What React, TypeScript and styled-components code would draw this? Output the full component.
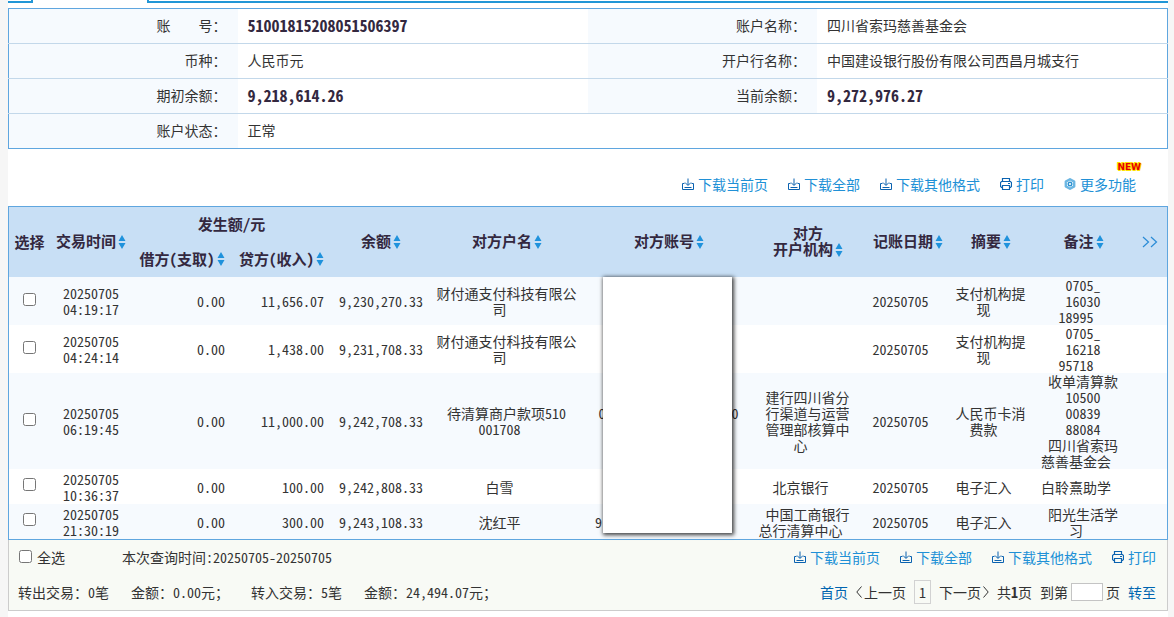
import React from "react";
import styled, { createGlobalStyle } from "styled-components";

const GlobalStyle = createGlobalStyle`
  * { box-sizing: border-box; }
  body {
    margin: 0;
    background: #f6f6f6;
    color: #333;
    font-family: "Noto Sans CJK SC", "Liberation Sans", sans-serif;
    font-size: 14px;
    line-height: 16px;
    font-feature-settings: "hwid" 1;
  }
  button, input {
    font: inherit;
    font-feature-settings: inherit;
    color: inherit;
  }
`;

const Page = styled.main`
  min-height: 100vh;
  margin: 0 6px 0 8px;
  background: #fff;
`;

const TabStrip = styled.div`
  display: flex;
  gap: 114px;
  height: 3px;
  margin-bottom: 5px;
`;

const TabEdge = styled.div<{ $side: "left" | "right" }>`
  border-bottom: 2px solid #2196d6;
  ${({ $side }) =>
    $side === "left"
      ? "width: 25px; border-right: 2px solid #2196d6;"
      : "flex: 1; border-left: 2px solid #2196d6;"}
`;

const InfoTable = styled.table`
  width: 100%;
  table-layout: fixed;
  border-collapse: collapse;
  border: 1px solid #5fa6df;
`;

const InfoRow = styled.tr`
  height: 35px;
  & + & { border-top: 1px solid #c3d8ea; }
`;

const InfoLabel = styled.th`
  width: 229px;
  padding: 0 11px 2px 0;
  background: #f6fafe;
  font-weight: normal;
  text-align: right;
  white-space: pre;
`;

const InfoValue = styled.td<{ $strong?: boolean }>`
  padding: 0 0 2px 10px;
  ${({ $strong }) => $strong && "font-size: 16px; font-weight: bold; color: #33283f;"}
`;

const Toolbar = styled.div`
  display: flex;
  justify-content: flex-end;
  padding: 27px 32px 14px 0;
`;

const Actions = styled.div`
  display: flex;
  gap: 20px;
`;

const Action = styled.a`
  position: relative;
  display: flex;
  align-items: center;
  gap: 4px;
  color: #2090d6;
  text-decoration: none;
`;

const NewBadge = styled.span`
  position: absolute;
  top: -14px;
  right: -5px;
  color: #e60000;
  font: bold 9px/10px "DejaVu Sans", sans-serif;
  font-feature-settings: normal;
  text-shadow: 1px 0 #ffe100, -1px 0 #ffe100, 0 1px #ffe100, 0 -1px #ffe100,
    1px 1px #ffe100, -1px -1px #ffe100;
`;

const DataTable = styled.table`
  width: 100%;
  table-layout: fixed;
  border-collapse: separate;
  border-spacing: 0;
  border: 1px solid #5fa6df;
`;

const HeadRow = styled.tr`
  height: 35px;
  background: #c8dff5;
`;

const HeadCell = styled.th<{ $shift?: boolean }>`
  padding: 0 0 0 ${({ $shift }) => ($shift ? "8px" : "0")};
  font-size: 15px;
  line-height: 16px;
  color: #33283f;
  white-space: nowrap;
`;

const GroupHeadCell = styled(HeadCell)`
  padding-bottom: 2px;
`;

const IconButton = styled.button`
  padding: 0;
  border: 0;
  background: none;
  vertical-align: middle;
  cursor: pointer;
  svg { display: block; }
`;

const SortButton = styled(IconButton)`
  margin: 0 0 2px 2px;
`;

const MoreButton = styled(IconButton)`
  display: block;
  margin: 0 auto;
`;

const DataRow = styled.tr`
  height: 35px;
  &:nth-child(odd) { background: #f6fafe; }
`;

const Cell = styled.td<{ $align?: "right"; $pad?: boolean }>`
  position: relative;
  padding: 0 ${({ $pad }) => ($pad ? "7px" : "0")} 0 0;
  text-align: ${({ $align }) => $align ?? "center"};
  white-space: nowrap;
`;

const Line = styled.span`
  display: block;
  min-height: 16px;
  padding-left: 7px;
  &:last-child { padding: 0 7px 0 0; }
`;

const RowCheck = styled.input`
  display: block;
  width: 13px;
  height: 13px;
  margin: 0 auto 4px;
`;

const MaskedNumber = styled.span<{ $width: number }>`
  display: inline-flex;
  justify-content: space-between;
  width: ${({ $width }) => $width}px;
`;

const Cover = styled.div`
  position: absolute;
  z-index: 1;
  top: 0;
  left: 20px;
  right: 15px;
  height: 256px;
  background: #fff;
  box-shadow: 1px 1px 4px 1px rgba(0, 0, 0, 0.75);
`;

const Summary = styled.footer`
  border: 1px solid #ccc;
  border-top: 0;
  background: #f8faf5;
`;

const SummaryRow = styled.div`
  display: flex;
  align-items: center;
  justify-content: space-between;
  height: 35px;
  padding: 0 11px 2px 9px;
`;

const Group = styled.div<{ $gap: number }>`
  display: flex;
  align-items: center;
  gap: ${({ $gap }) => $gap}px;
`;

const CheckLabel = styled.label`
  display: flex;
  align-items: center;
  gap: 5px;
`;

const AllCheck = styled.input`
  width: 13px;
  height: 13px;
  margin: 0 0 0 1px;
`;

const PageLink = styled.a<{ $muted?: boolean }>`
  display: flex;
  align-items: center;
  gap: 1px;
  color: ${({ $muted }) => ($muted ? "#333" : "#0065b0")};
  text-decoration: none;
`;

const CurrentPage = styled.span`
  padding: 3px 4px;
  border: 1px solid #d2d2d2;
`;

const JumpLabel = styled.label`
  display: flex;
  align-items: center;
  gap: 3px;
`;

const JumpInput = styled.input`
  width: 32px;
  height: 18px;
  padding: 0 2px;
  border: 1px solid #c4c4c4;
  background: #fff;
`;

const DownloadIcon = () => (
  <svg width="12" height="12" viewBox="0 0 12 12" fill="none" stroke="#0a62b0">
    <path d="M2.500 5.500h-2v6h11v-6h-2M6 .5v6.500M3 4.500L6 7.500l3-3M2.500 9.500h7" />
  </svg>
);

const PrintIcon = () => (
  <svg width="12" height="12" viewBox="0 0 12 12" fill="none" stroke="#0a62b0">
    <path d="M2.500 3.500v-3h7v3M2.500 9.500h-1l-1-1v-4l1-1h9l1 1v4l-1 1h-1M2.500 7.500h7v4h-7zM8 5.500h2" strokeWidth="1.200" />
  </svg>
);

const GearIcon = () => (
  <svg width="12" height="12" viewBox="0 0 12 12" fill="none">
    <path d="M6 1.200L10.200 3.600v4.800L6 10.800 1.800 8.400V3.600z" stroke="#6cb6e2" strokeWidth="2.400" strokeLinejoin="round" />
    <circle cx="6" cy="6" r="1.800" stroke="#2e93d2" strokeWidth="1.400" fill="#fff" />
  </svg>
);

const SortIcon = () => (
  <svg width="8" height="14" viewBox="0 0 8 14" fill="#1f92dc">
    <path d="M4 0l3.500 6h-7zM4 14l3.500-6h-7z" />
  </svg>
);

const Chevron = ({ left }: { left?: boolean }) => (
  <svg width="7" height="12" viewBox="0 0 7 12" fill="none" stroke="#333">
    <path d={left ? "M5.500 .5L.8 6l4.700 5.500" : "M1.500 .5L6.200 6l-4.700 5.500"} />
  </svg>
);

const DoubleChevron = () => (
  <svg width="16" height="12" viewBox="0 0 16 12" fill="none" stroke="#2a8bd6" strokeWidth="1.200">
    <path d="M1 1l5.500 5L1 11M9 1l5.500 5L9 11" />
  </svg>
);

const ActionList = ({ withMore }: { withMore?: boolean }) => (
  <Actions>
    <Action href="#page"><DownloadIcon />下载当前页</Action>
    <Action href="#all"><DownloadIcon />下载全部</Action>
    <Action href="#formats"><DownloadIcon />下载其他格式</Action>
    <Action href="#print"><PrintIcon />打印</Action>
    {withMore && (
      <Action href="#more"><GearIcon />更多功能<NewBadge>NEW</NewBadge></Action>
    )}
  </Actions>
);

type HeadProps = { lines: string[]; rows?: number; shift?: boolean };

const SortHead = ({ lines, rows, shift }: HeadProps) => (
  <HeadCell rowSpan={rows} $shift={shift}>
    {lines.map((line, i) => (
      <React.Fragment key={line}>
        {i > 0 && <br />}
        {line}
      </React.Fragment>
    ))}
    <SortButton type="button" aria-label={`按${lines.join("")}排序`}><SortIcon /></SortButton>
  </HeadCell>
);

const Lines = ({ items }: { items: string[] }) => (
  <>{items.map((item) => <Line key={item}>{item}</Line>)}</>
);

type Entry = {
  time: string;
  credit: string;
  balance: string;
  name: string[];
  account?: React.ReactNode;
  bank: string[];
  summary: string[];
  remark: string[];
};

const entries: Entry[] = [
  {
    time: "04:19:17", credit: "11,656.07", balance: "9,230,270.33",
    name: ["财付通支付科技有限公", "司"], account: <Cover />, bank: [],
    summary: ["支付机构提", "现"], remark: ["0705_", "16030", "18995"],
  },
  {
    time: "04:24:14", credit: "1,438.00", balance: "9,231,708.33",
    name: ["财付通支付科技有限公", "司"], bank: [],
    summary: ["支付机构提", "现"], remark: ["0705_", "16218", "95718"],
  },
  {
    time: "06:19:45", credit: "11,000.00", balance: "9,242,708.33",
    name: ["待清算商户款项510", "001708"],
    account: (
      <>
        <Line><MaskedNumber $width={140}><span>0</span><span>0</span></MaskedNumber></Line>
        <Line />
      </>
    ),
    bank: ["建行四川省分", "行渠道与运营", "管理部核算中", "心"],
    summary: ["人民币卡消", "费款"],
    remark: ["收单清算款", "10500", "00839", "88084", "四川省索玛", "慈善基金会"],
  },
  {
    time: "10:36:37", credit: "100.00", balance: "9,242,808.33",
    name: ["白雪"], bank: ["北京银行"], summary: ["电子汇入"], remark: ["白聆熹助学"],
  },
  {
    time: "21:30:19", credit: "300.00", balance: "9,243,108.33",
    name: ["沈红平"],
    account: <Line><MaskedNumber $width={133}><span>9</span></MaskedNumber></Line>,
    bank: ["中国工商银行", "总行清算中心"], summary: ["电子汇入"], remark: ["阳光生活学", "习"],
  },
];

const columnWidths = [41, 82, 100, 99, 92, 160, 164, 114, 86, 80, 105, 35];

export default function App() {
  return (
    <>
      <GlobalStyle />
      <Page>
        <TabStrip>
          <TabEdge $side="left" />
          <TabEdge $side="right" />
        </TabStrip>

        <InfoTable>
          <tbody>
            <InfoRow>
              <InfoLabel scope="row">{"账\u3000\u3000\u3000\u3000号："}</InfoLabel>
              <InfoValue $strong>51001815208051506397</InfoValue>
              <InfoLabel scope="row">账户名称：</InfoLabel>
              <InfoValue>四川省索玛慈善基金会</InfoValue>
            </InfoRow>
            <InfoRow>
              <InfoLabel scope="row">币种：</InfoLabel>
              <InfoValue>人民币元</InfoValue>
              <InfoLabel scope="row">开户行名称：</InfoLabel>
              <InfoValue>中国建设银行股份有限公司西昌月城支行</InfoValue>
            </InfoRow>
            <InfoRow>
              <InfoLabel scope="row">期初余额：</InfoLabel>
              <InfoValue $strong>9,218,614.26</InfoValue>
              <InfoLabel scope="row">当前余额：</InfoLabel>
              <InfoValue $strong>9,272,976.27</InfoValue>
            </InfoRow>
            <InfoRow>
              <InfoLabel scope="row">账户状态：</InfoLabel>
              <InfoValue colSpan={3}>正常</InfoValue>
            </InfoRow>
          </tbody>
        </InfoTable>

        <Toolbar>
          <ActionList withMore />
        </Toolbar>

        <DataTable>
          <colgroup>
            {columnWidths.map((width, i) => <col key={i} width={width} />)}
          </colgroup>
          <thead>
            <HeadRow>
              <HeadCell rowSpan={2}>选择</HeadCell>
              <SortHead rows={2} lines={["交易时间"]} />
              <GroupHeadCell colSpan={2}>发生额/元</GroupHeadCell>
              <SortHead rows={2} shift lines={["余额"]} />
              <SortHead rows={2} shift lines={["对方户名"]} />
              <SortHead rows={2} shift lines={["对方账号"]} />
              <SortHead rows={2} shift lines={["对方", "开户机构"]} />
              <SortHead rows={2} shift lines={["记账日期"]} />
              <SortHead rows={2} shift lines={["摘要"]} />
              <SortHead rows={2} shift lines={["备注"]} />
              <HeadCell rowSpan={2}>
                <MoreButton type="button" aria-label="更多列"><DoubleChevron /></MoreButton>
              </HeadCell>
            </HeadRow>
            <HeadRow>
              <SortHead lines={["借方(支取)"]} />
              <SortHead lines={["贷方(收入)"]} />
            </HeadRow>
          </thead>
          <tbody>
            {entries.map((entry) => (
              <DataRow key={entry.time}>
                <Cell><RowCheck type="checkbox" aria-label={`选择 ${entry.time}`} /></Cell>
                <Cell>20250705<br />{entry.time}</Cell>
                <Cell $align="right" $pad>0.00</Cell>
                <Cell $align="right" $pad>{entry.credit}</Cell>
                <Cell $align="right">{entry.balance}</Cell>
                <Cell><Lines items={entry.name} /></Cell>
                <Cell>{entry.account}</Cell>
                <Cell><Lines items={entry.bank} /></Cell>
                <Cell><Line>20250705</Line></Cell>
                <Cell><Lines items={entry.summary} /></Cell>
                <Cell><Lines items={entry.remark} /></Cell>
                <Cell />
              </DataRow>
            ))}
          </tbody>
        </DataTable>

        <Summary>
          <SummaryRow>
            <Group $gap={57}>
              <CheckLabel><AllCheck type="checkbox" />全选</CheckLabel>
              <span>本次查询时间:20250705-20250705</span>
            </Group>
            <ActionList />
          </SummaryRow>
          <SummaryRow>
            <Group $gap={22}>
              <span>转出交易：0笔</span>
              <span>金额：0.00元；</span>
              <span>转入交易：5笔</span>
              <span>金额：24,494.07元；</span>
            </Group>
            <Group $gap={8}>
              <PageLink href="#first">首页</PageLink>
              <PageLink $muted href="#prev"><Chevron left />上一页</PageLink>
              <CurrentPage>1</CurrentPage>
              <PageLink $muted href="#next">下一页<Chevron /></PageLink>
              <span>共<b>1</b>页</span>
              <JumpLabel>到第<JumpInput type="text" aria-label="页码" />页</JumpLabel>
              <PageLink href="#go">转至</PageLink>
            </Group>
          </SummaryRow>
        </Summary>
      </Page>
    </>
  );
}
